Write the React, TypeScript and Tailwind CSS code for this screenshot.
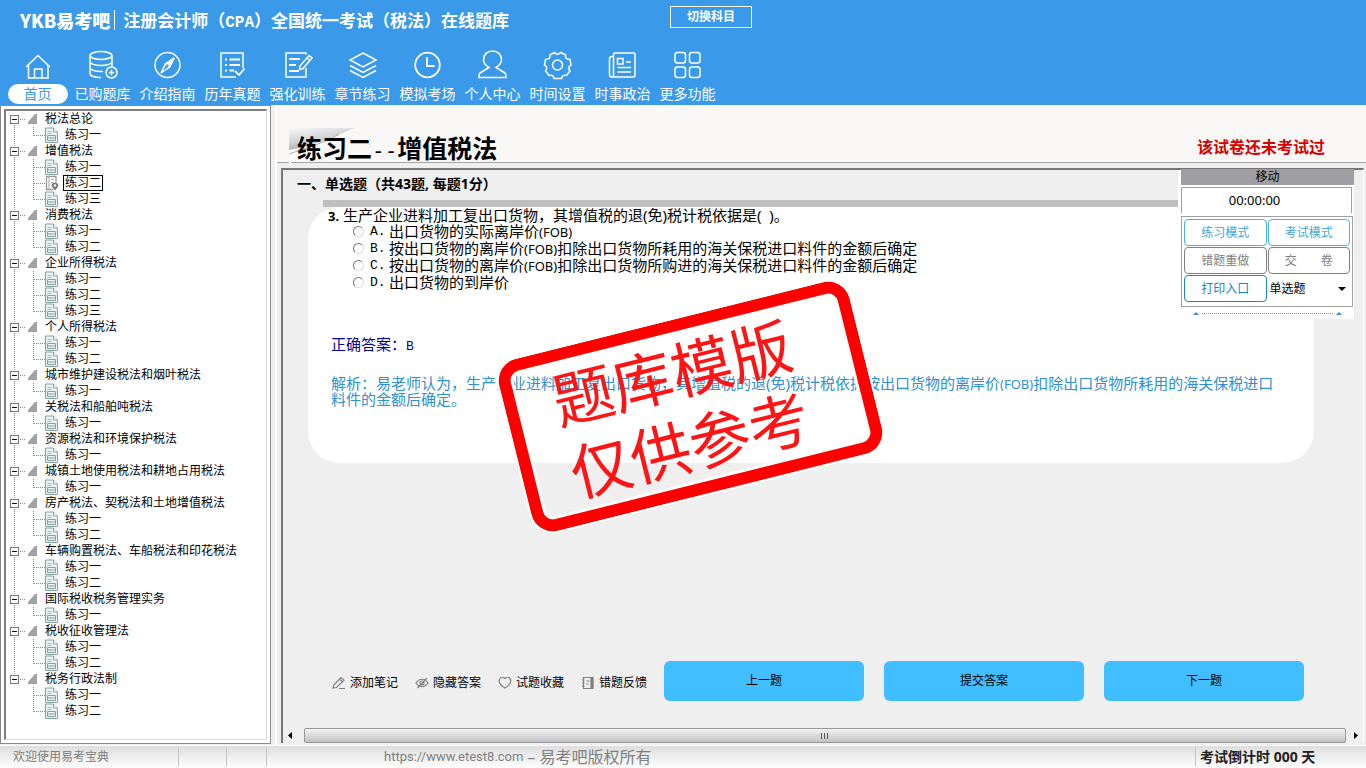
import React, { useState } from "react";

type IconName =
  | "home" | "db" | "compass" | "checklist" | "edit" | "layers"
  | "clock" | "user" | "gear" | "news" | "grid";

const NAV: { label: string; icon: IconName }[] = [
  { label: "首页", icon: "home" },
  { label: "已购题库", icon: "db" },
  { label: "介绍指南", icon: "compass" },
  { label: "历年真题", icon: "checklist" },
  { label: "强化训练", icon: "edit" },
  { label: "章节练习", icon: "layers" },
  { label: "模拟考场", icon: "clock" },
  { label: "个人中心", icon: "user" },
  { label: "时间设置", icon: "gear" },
  { label: "时事政治", icon: "news" },
  { label: "更多功能", icon: "grid" },
];

const PRACTICE = ["练习一", "练习二", "练习三"];

const CHAPTERS: { title: string; count: number }[] = [
  { title: "税法总论", count: 1 },
  { title: "增值税法", count: 3 },
  { title: "消费税法", count: 2 },
  { title: "企业所得税法", count: 3 },
  { title: "个人所得税法", count: 2 },
  { title: "城市维护建设税法和烟叶税法", count: 1 },
  { title: "关税法和船舶吨税法", count: 1 },
  { title: "资源税法和环境保护税法", count: 1 },
  { title: "城镇土地使用税法和耕地占用税法", count: 1 },
  { title: "房产税法、契税法和土地增值税法", count: 2 },
  { title: "车辆购置税法、车船税法和印花税法", count: 2 },
  { title: "国际税收税务管理实务", count: 1 },
  { title: "税收征收管理法", count: 2 },
  { title: "税务行政法制", count: 2 },
];

function Fob() {
  return <span className="text-[13px] leading-none">(FOB)</span>;
}

const OPTIONS: { key: string; text: React.ReactNode }[] = [
  { key: "A", text: <>出口货物的实际离岸价<Fob /></> },
  { key: "B", text: <>按出口货物的离岸价<Fob />扣除出口货物所耗用的海关保税进口料件的金额后确定</> },
  { key: "C", text: <>按出口货物的离岸价<Fob />扣除出口货物所购进的海关保税进口料件的金额后确定</> },
  { key: "D", text: "出口货物的到岸价" },
];

const NAV_PATHS: Record<IconName, React.ReactNode> = {
  home: (
    <>
      <path d="M3 17 15 5.500 27 17" />
      <path d="M5.500 15v13h19.500V15" />
      <path d="M11.500 28v-9h7.500v9" />
    </>
  ),
  db: (
    <>
      <ellipse cx="13" cy="5.500" rx="11" ry="4" />
      <path d="M2 5.500v18c0 2.500 5 4 11 4M24 5.500v11M2 11.500c0 2.300 5 4 11 4s11-1.700 11-4M2 17.500c0 2.300 5 4 11 4h2" />
      <circle cx="23.500" cy="22.500" r="5.500" />
      <path d="M23.500 19.800v5.400M20.800 22.500h5.400" />
    </>
  ),
  compass: (
    <>
      <circle cx="14.500" cy="15" r="12.500" />
      <path d="m21 8-4.500 9-8.500 6 4.500-9z" />
      <path d="m21 8-8.500 6 4 3z" fill="currentColor" />
      <circle cx="14.500" cy="15.500" r="1.200" fill="#3a9ae9" stroke="none" />
    </>
  ),
  checklist: (
    <>
      <path d="M25 18V3H3v24h15" />
      <path d="M7 9.500h2M11.500 9.500H22M7 15h2M11.500 15H22M7 20.500h2M11.500 20.500H16M17 21l4 4 5.500-6.500" strokeWidth="1.800" />
    </>
  ),
  edit: (
    <>
      <path d="M23 4.500V3H3v24h20v-9" />
      <path d="M6 9h11M6 15h7M6 21h10" strokeWidth="1.800" />
      <path d="m26 5.500 3 2.500-9 10.500-3.500 1 .5-3.500zM24 8l3 2.500" />
    </>
  ),
  layers: (
    <>
      <path d="m15 3 13 7-13 7-13-7z" />
      <path d="m2 15.500 13 7 13-7M2 20.500l13 7 13-7" />
    </>
  ),
  clock: (
    <>
      <circle cx="14.500" cy="15" r="12.300" strokeWidth="1.800" />
      <path d="M14 7v9h7.500" strokeWidth="1.800" />
    </>
  ),
  user: <path d="M11 17.500C7.500 15.500 5.500 13 5.500 9.500c0-5 4-8.500 9-8.500s9 3.500 9 8.500c0 3.500-2 6-5.500 8l9 5.500c1 .7 1 2 1 4.500H1c0-2.500 0-3.800 1-4.500z" />,
  gear: (
    <>
      <path d="M11.500 2.500c2 2.300 4 2.300 6 0l5 2.300c-.5 3 .8 4.500 4.500 4.700l1 5.500c-2.500 1.500-3 3.500-1 6l-3.500 4.500c-3-.8-4.500.3-5 3H11c-.5-2.800-2.200-3.800-5-3L2.500 21c2-2.500 1.500-4.500-1-6l1-5.500c3.700-.2 5-1.700 4.500-4.700z" />
      <circle cx="14.500" cy="15" r="5" />
    </>
  ),
  news: (
    <>
      <path d="M5.500 27V4.500C5.500 3.500 6 3 7 3h18.500c1 0 1.500.5 1.500 1.500v21c0 1-.5 1.500-1.500 1.500H4c-1.500 0-2.500-1-2.500-2.500V9C1.500 7.500 2.500 6.500 4 6.500h1.500" />
      <path d="M9.500 8.500h5.500v5.500H9.500zM18 12h5M9.500 17.500H23M9.500 22H23" />
    </>
  ),
  grid: (
    <>
      <rect x="2" y="2.500" width="10.500" height="10.500" rx="2.500" />
      <rect x="16.500" y="2.500" width="10.500" height="10.500" rx="2.500" />
      <rect x="2" y="17" width="10.500" height="10.500" rx="2.500" />
      <rect x="16.500" y="17" width="10.500" height="10.500" rx="2.500" />
    </>
  ),
};

function NavIcon({ name }: { name: IconName }) {
  return (
    <svg viewBox="0 0 30 30" className="h-[30px] w-[30px]" fill="none" stroke="currentColor" strokeWidth="1.500" aria-hidden="true">
      {NAV_PATHS[name]}
    </svg>
  );
}

/* Tree connectors */
function ChapterGlyph({ first, last }: { first: boolean; last: boolean }) {
  return (
    <svg viewBox="0 0 39 16" className="h-4 w-[39px] shrink-0" fill="none" aria-hidden="true" shapeRendering="crispEdges">
      <path d={first ? "M8.500 8v8" : last ? "M8.500 0v8" : "M8.500 0v16"} stroke="#888" strokeDasharray="1 1" />
      <path d="M14 8.500h5" stroke="#888" strokeDasharray="1 1" />
      <rect x="4.500" y="4.500" width="8" height="8" fill="#fff" stroke="#777" />
      <path d="M6 8.500h5" stroke="#111" />
      <path d="M31 3v10H22v-2l7-8z" fill="#a3a3a3" shapeRendering="auto" />
    </svg>
  );
}

function PracticeGlyph({ end, trunk, active }: { end: boolean; trunk: boolean; active: boolean }) {
  return (
    <svg viewBox="0 0 57 16" className="h-4 w-[57px] shrink-0" fill="none" aria-hidden="true">
      <g stroke="#888" strokeDasharray="1 1" shapeRendering="crispEdges">
        {trunk && <path d="M8.500 0v16" />}
        <path d={end ? "M27.500 0v9" : "M27.500 0v16"} />
        <path d="M28 8.500h11" />
      </g>
      {active ? (
        <>
          <path d="M50 7V1.500H40.500v13H47" stroke="#9a9a9a" strokeWidth="1.300" />
          <path d="M43 1v14M45 4.500h3M45 7.500h2" stroke="#aaa" />
          <path d="M49 7.500c2 0 3.200 1.300 3.200 3s-1.500 3-3.200 4.800c-1.700-1.800-3.200-3.100-3.200-4.800s1.200-3 3.200-3z" fill="#777" />
          <circle cx="49" cy="10.500" r="1.200" fill="#fff" />
        </>
      ) : (
        <>
          <path d="M39.500 1h8l4 4v10.500h-12z" fill="#e6f3f3" stroke="#8aa3a3" />
          <path d="M47.500 1v4h4" fill="#fff" stroke="#8aa3a3" />
          <path d="M41.500 4.500h4M41.500 6.500h4" stroke="#a9bdbd" />
          <path d="M41.500 8.500h8v5h-8zM41.500 11h8" stroke="#8aa3a3" />
        </>
      )}
    </svg>
  );
}

function Sidebar() {
  const [selected, setSelected] = useState("1-1");
  return (
    <aside className="mb-px flex w-[271px] shrink-0 flex-col border border-[#8a8a8a] bg-white p-[3px]">
      <ul className="flex-1 border-t-2 border-r border-b border-l-2 border-t-[#808080] border-r-[#dcdcdc] border-b-[#dcdcdc] border-l-[#808080] text-xs">
        {CHAPTERS.map((chapter, i) => (
          <li key={chapter.title}>
            <div className="flex h-4 items-center leading-4">
              <ChapterGlyph first={i === 0} last={i === CHAPTERS.length - 1} />
              {chapter.title}
            </div>
            <ul>
              {PRACTICE.slice(0, chapter.count).map((name, j) => {
                const id = `${i}-${j}`;
                const active = id === selected;
                return (
                  <li key={id} className="flex h-4 items-center">
                    <PracticeGlyph end={j === chapter.count - 1} trunk={i < CHAPTERS.length - 1} active={active} />
                    <button
                      type="button"
                      onClick={() => setSelected(id)}
                      className={`h-4 border px-px leading-[14px] ${active ? "border-black" : "border-transparent"}`}
                    >
                      {name}
                    </button>
                  </li>
                );
              })}
            </ul>
          </li>
        ))}
      </ul>
    </aside>
  );
}

function ExamPanel() {
  return (
    <div className="absolute top-0 right-[9px] w-44 bg-white pl-[3px] text-xs">
      <div className="-mt-px h-4 bg-[#9f9fa3] text-center leading-4">移动</div>
      <div className="mt-[2px] mr-[2px] h-[26px] border border-b-0 border-[#a0a0a0] pr-6 text-center text-[13px] leading-6">00:00:00</div>
      <div className="mt-[3px] mr-px grid grid-cols-2 gap-x-px gap-y-px border border-[#a0a0a0] px-[2px] pt-[2px] pb-1">
        <button type="button" className="h-[27px] rounded border border-[#45b5e8] text-[#3fa9dc]">练习模式</button>
        <button type="button" className="h-[27px] rounded border border-[#45b5e8] text-[#3fa9dc]">考试模式</button>
        <button type="button" className="h-[27px] rounded border border-[#808080] text-[#808080]">错题重做</button>
        <button type="button" className="flex h-[27px] items-center justify-center gap-6 rounded border border-[#808080] text-[#808080]">
          <span>交</span>
          <span>卷</span>
        </button>
        <button type="button" className="h-[27px] rounded border border-[#1c86c8] text-[#1c86c8]">打印入口</button>
        <div className="relative">
          <select aria-label="题型" className="h-[27px] w-full appearance-none bg-white pl-[2px]">
            <option>单选题</option>
          </select>
          <svg viewBox="0 0 8 4" className="pointer-events-none absolute top-3 right-1 h-1 w-2" aria-hidden="true">
            <path d="M0 0h8L4 4z" />
          </svg>
        </div>
      </div>
      <div className="flex h-3 items-center justify-between px-3">
        <svg viewBox="0 0 6 3" className="h-[3px] w-[6px] fill-[#2f8fe0]" aria-hidden="true"><path d="M0 3h6L3 0z" /></svg>
        <div className="mx-[3px] flex-1 border-t border-dotted border-[#4da3e8]" />
        <svg viewBox="0 0 6 3" className="h-[3px] w-[6px] fill-[#2f8fe0]" aria-hidden="true"><path d="M0 3h6L3 0z" /></svg>
      </div>
    </div>
  );
}

function Stamp() {
  return (
    <div className="pointer-events-none absolute top-[111px] left-[202px] flex h-[177px] w-[361px] -rotate-14 flex-col items-center justify-center rounded-[22px] border-[12px] border-[#fe0000] pr-5 text-[61px] leading-[74px] whitespace-nowrap text-[#fe1414] shadow-[inset_0_0_0_3px_#fff] outline-2 outline-white">
      <span>题库模版</span>
      <span>仅供参考</span>
    </div>
  );
}

function Question() {
  const [answer, setAnswer] = useState("");
  return (
    <section className="relative mr-[49px] ml-[25px] h-64 rounded-[32px] bg-white text-[15px]">
      <h3 className="pl-5 leading-4">
        <b className="text-[13px] leading-none">3.</b> 生产企业进料加工复出口货物，其增值税的退(免)税计税依据是(&nbsp; )。
      </h3>
      <div className="pl-[45px]">
        {OPTIONS.map((o) => (
          <label key={o.key} className="flex h-[17px] items-center leading-[17px]">
            <input
              type="radio"
              name="answer"
              value={o.key}
              checked={answer === o.key}
              onChange={() => setAnswer(o.key)}
              className="h-[11px] w-[11px] appearance-none rounded-full border border-t-[#777] border-r-[#ddd] border-b-[#ddd] border-l-[#777] bg-white checked:bg-black"
            />
            <span className="ml-[6px] w-[19px] font-['Liberation_Mono','Noto_Sans_CJK_SC',monospace] text-[13px]">{o.key}.</span>
            <span>{o.text}</span>
          </label>
        ))}
      </div>
      <p className="mt-[45px] pl-[23px] leading-4 text-[#0000a0]">
        正确答案：<span className="font-['Liberation_Mono',monospace] text-[13px] leading-none">B</span>
      </p>
      <p className="mt-[22px] pr-7 pl-[23px] leading-4 text-[#2f8fd0]">
        解析：易老师认为，生产企业进料加工复出口货物，其增值税的退(免)税计税依据按出口货物的离岸价<Fob />扣除出口货物所耗用的海关保税进口料件的金额后确定。
      </p>
      <Stamp />
    </section>
  );
}

function ToolIcon({ children }: { children: React.ReactNode }) {
  return (
    <svg viewBox="0 0 14 14" className="h-[14px] w-[14px]" fill="none" stroke="#808080" strokeWidth="1.200" aria-hidden="true">
      {children}
    </svg>
  );
}

const TOOLS: { label: string; icon: React.ReactNode }[] = [
  { label: "添加笔记", icon: <path d="m1 12 .7-3L9 1.500l3 2.700L4.500 11.500zM7.500 3l3 2.700M7 12.500h6" /> },
  {
    label: "隐藏答案",
    icon: (
      <>
        <path d="M1 7c3.300-5 8.700-5 12 0-3.300 5-8.700 5-12 0zM2.500 12 12 2" />
        <circle cx="7" cy="7" r="2" />
      </>
    ),
  },
  { label: "试题收藏", icon: <path d="M7 12C-1.500 7 1 1.500 4.500 1.500c1.300 0 2 .5 2.500 1 .5-.5 1.200-1 2.500-1C13 1.500 15.500 7 7 12z" /> },
  {
    label: "错题反馈",
    icon: (
      <>
        <path d="M2.500 1.500h9v11h-9zM1 4h2.500M1 7h2.500M1 10h2.500M5.500 5h3M5.500 8h2" />
        <path d="M10 1.500h2v11h-2z" fill="#808080" />
      </>
    ),
  },
];

export default function App() {
  return (
    <div className="flex min-h-screen flex-col bg-[#efefef] font-['Noto_Sans','Noto_Sans_CJK_SC',sans-serif] text-black">
      {/* Header */}
      <header className="h-[105px] bg-[#3a9ae9] text-white">
        <div className="flex h-10 items-center">
          <div className="flex min-w-[670px] items-center pl-5 font-['Noto_Sans_CJK_SC',sans-serif]">
            <span className="border-r border-white pr-1 text-lg leading-5 font-black">YKB易考吧</span>
            <h1 className="pl-2 text-[17px] leading-5 font-bold">
              注册会计师（<span className="font-['Liberation_Mono',monospace] text-base leading-none">CPA</span>）全国统一考试（税法）在线题库
            </h1>
          </div>
          <button type="button" className="mb-[7px] h-[22px] w-[82px] border border-white text-xs font-bold">切换科目</button>
        </div>
        <nav className="flex pt-[10px] pl-[5px]">
          {NAV.map((item, i) => (
            <a key={item.label} href="#" className="flex w-[65px] flex-col items-center gap-1 whitespace-nowrap">
              <NavIcon name={item.icon} />
              <span className={`rounded-full text-sm leading-5 ${i === 0 ? "bg-white px-4 text-[#3a9ae9]" : ""}`}>{item.label}</span>
            </a>
          ))}
        </nav>
      </header>

      <div className="flex flex-1">
        <Sidebar />
        <main className="ml-1 flex min-w-0 flex-1 flex-col border-l-2 border-white">
          {/* Title */}
          <div className="flex h-[58px] items-end justify-between border-b border-[#a6a6a6] bg-[#f9f8f7] pr-[41px] pl-5">
            <div className="relative">
              <svg viewBox="0 0 66 36" className="absolute -top-1 -left-2 h-9 w-[66px]" aria-hidden="true">
                <defs>
                  <linearGradient id="fold" x1="0" y1="0" x2="0.400" y2="1">
                    <stop offset="0" stopColor="#f8f8f8" />
                    <stop offset="0.500" stopColor="#d2d3d6" />
                    <stop offset="1" stopColor="#8f9297" />
                  </linearGradient>
                </defs>
                <path d="M0 0h66L30 15 0 26z" fill="url(#fold)" />
                <path d="M0 22C20 18 40 12 66 0 45 14 25 15 0 36z" fill="#fff" />
                <path d="M50 6C38 14 22 18 0 26" fill="none" stroke="#a9abb0" />
              </svg>
              <h2 className="relative pt-1 text-[25px] leading-6 font-bold">
                练习二<span className="font-['DejaVu_Sans_Mono',monospace] text-[21px] leading-none font-normal">--</span>增值税法
              </h2>
            </div>
            <p className="pb-[3px] text-base leading-6 font-bold text-[#d60000]">该试卷还未考试过</p>
          </div>

          {/* Exam paper */}
          <div className="relative mt-[5px] mr-[2px] mb-[2px] ml-1 flex flex-1 flex-col border-t-2 border-r border-l-2 border-t-[#777] border-r-white border-l-[#777]">
            <h3 className="h-[30px] pl-[14px] text-sm leading-[28px] font-bold">一、单选题（共43题, 每题1分）</h3>
            <div className="mr-[49px] ml-10 h-[7px] bg-[#bfbfbf]" />
            <Question />
            <div className="flex-1" />
            <div className="mb-[27px] flex items-center gap-5 pl-[49px]">
              <div className="flex w-[312px] gap-[17px] pt-1">
                {TOOLS.map((t) => (
                  <button key={t.label} type="button" className="flex items-center gap-1 text-xs whitespace-nowrap">
                    <ToolIcon>{t.icon}</ToolIcon>
                    {t.label}
                  </button>
                ))}
              </div>
              {["上一题", "提交答案", "下一题"].map((label) => (
                <button key={label} type="button" className="h-10 w-[200px] rounded-md bg-[#40beff] text-xs">{label}</button>
              ))}
            </div>
            {/* Horizontal scrollbar */}
            <div className="flex h-[15px] items-center bg-[#f0f0f0]">
              <svg viewBox="0 0 4 7" className="mx-[5px] h-[7px] w-1" aria-hidden="true"><path d="M4 0v7L0 3.500z" /></svg>
              <div className="ml-[7px] flex h-[15px] flex-1 items-center justify-center gap-px rounded-xs border border-[#979797] bg-linear-to-b from-[#f4f4f4] to-[#c2c2c4]">
                {[0, 1, 2].map((n) => (
                  <span key={n} className="mr-px h-[6px] w-px bg-[#555]" />
                ))}
              </div>
              <svg viewBox="0 0 4 7" className="mr-[5px] ml-2 h-[7px] w-1" aria-hidden="true"><path d="M0 0v7l4-3.500z" /></svg>
            </div>
            <ExamPanel />
          </div>
        </main>
      </div>

      {/* Status bar */}
      <footer className="flex h-[23px] items-center border-t border-white bg-linear-to-b from-[#dedede] to-white text-xs text-[#808080]">
        <span className="w-[178px] pl-[13px]">欢迎使用易考宝典</span>
        <span className="h-[18px] w-12 border-l border-[#c4c4c4]" />
        <span className="h-[18px] w-10 border-l border-[#c4c4c4]" />
        <span className="flex flex-1 items-center border-l border-[#c4c4c4] pl-[117px] leading-[18px]">
          <a href="https://www.etest8.com" className="font-['Roboto',sans-serif] text-[13px]">https://www.etest8.com</a>
          <span className="pl-1 text-base leading-[18px]">– 易考吧版权所有</span>
        </span>
        <span className="w-[171px] border-l border-[#c4c4c4] pl-1 text-sm leading-[18px] font-bold text-[#222]">考试倒计时 000 天</span>
      </footer>
    </div>
  );
}
